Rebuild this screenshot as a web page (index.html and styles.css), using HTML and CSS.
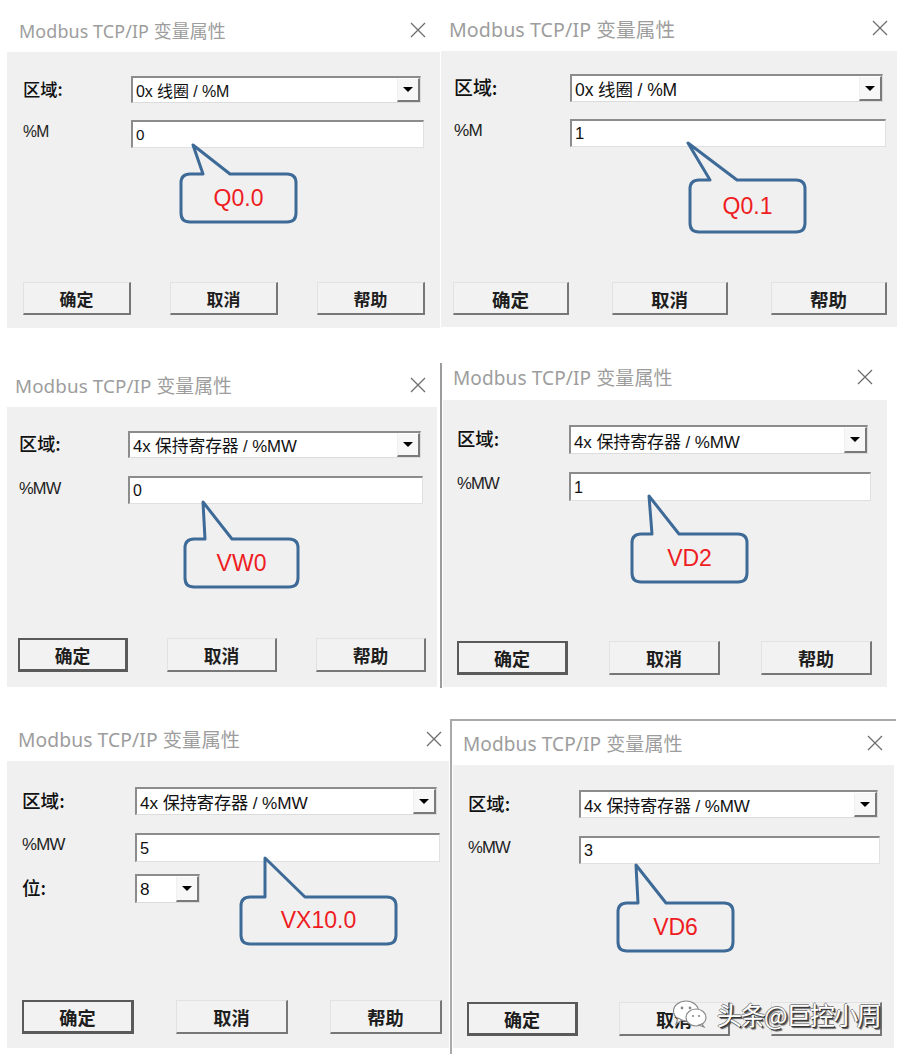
FILE: index.html
```html
<!DOCTYPE html>
<html lang="zh-CN">
<head>
<meta charset="utf-8">
<title>Modbus TCP/IP 变量属性</title>
<link rel="stylesheet" href="styles.css">
</head>
<body>
<div class="canvas">

  <section class="dlg d1">
    <header class="tbar"><span class="ttl">Modbus TCP/IP 变量属性</span><svg class="close" viewBox="0 0 16 16"><path d="M1 1L15 15M15 1L1 15"/></svg></header>
    <div class="body">
      <div class="row"><span class="lbl">区域:</span><div class="combo"><span class="ctext">0x 线圈 / %M</span><span class="drop"><i class="arrow"></i></span></div></div>
      <div class="row r2"><span class="lbl sm">%M</span><div class="field">0</div></div>
      <div class="btns"><div class="btn">确定</div><div class="btn">取消</div><div class="btn">帮助</div></div>
    </div>
  </section>

  <section class="dlg d2">
    <header class="tbar"><span class="ttl">Modbus TCP/IP 变量属性</span><svg class="close" viewBox="0 0 16 16"><path d="M1 1L15 15M15 1L1 15"/></svg></header>
    <div class="body">
      <div class="row"><span class="lbl">区域:</span><div class="combo"><span class="ctext">0x 线圈 / %M</span><span class="drop"><i class="arrow"></i></span></div></div>
      <div class="row r2"><span class="lbl sm">%M</span><div class="field">1</div></div>
      <div class="btns"><div class="btn">确定</div><div class="btn">取消</div><div class="btn">帮助</div></div>
    </div>
  </section>

  <section class="dlg d3">
    <header class="tbar"><span class="ttl">Modbus TCP/IP 变量属性</span><svg class="close" viewBox="0 0 16 16"><path d="M1 1L15 15M15 1L1 15"/></svg></header>
    <div class="body">
      <div class="row"><span class="lbl">区域:</span><div class="combo"><span class="ctext">4x 保持寄存器 / %MW</span><span class="drop"><i class="arrow"></i></span></div></div>
      <div class="row r2"><span class="lbl sm">%MW</span><div class="field">0</div></div>
      <div class="btns"><div class="btn def">确定</div><div class="btn">取消</div><div class="btn">帮助</div></div>
    </div>
  </section>

  <section class="dlg d4">
    <header class="tbar"><span class="ttl">Modbus TCP/IP 变量属性</span><svg class="close" viewBox="0 0 16 16"><path d="M1 1L15 15M15 1L1 15"/></svg></header>
    <div class="body">
      <div class="row"><span class="lbl">区域:</span><div class="combo"><span class="ctext">4x 保持寄存器 / %MW</span><span class="drop"><i class="arrow"></i></span></div></div>
      <div class="row r2"><span class="lbl sm">%MW</span><div class="field">1</div></div>
      <div class="btns"><div class="btn def">确定</div><div class="btn">取消</div><div class="btn">帮助</div></div>
    </div>
  </section>

  <section class="dlg d5">
    <header class="tbar"><span class="ttl">Modbus TCP/IP 变量属性</span><svg class="close" viewBox="0 0 16 16"><path d="M1 1L15 15M15 1L1 15"/></svg></header>
    <div class="body">
      <div class="row"><span class="lbl">区域:</span><div class="combo"><span class="ctext">4x 保持寄存器 / %MW</span><span class="drop"><i class="arrow"></i></span></div></div>
      <div class="row r2"><span class="lbl sm">%MW</span><div class="field">5</div></div>
      <div class="row r3"><span class="lbl">位:</span><div class="combo bit"><span class="ctext">8</span><span class="drop"><i class="arrow"></i></span></div></div>
      <div class="btns"><div class="btn def">确定</div><div class="btn">取消</div><div class="btn">帮助</div></div>
    </div>
  </section>

  <section class="dlg d6">
    <header class="tbar"><span class="ttl">Modbus TCP/IP 变量属性</span><svg class="close" viewBox="0 0 16 16"><path d="M1 1L15 15M15 1L1 15"/></svg></header>
    <div class="body">
      <div class="row"><span class="lbl">区域:</span><div class="combo"><span class="ctext">4x 保持寄存器 / %MW</span><span class="drop"><i class="arrow"></i></span></div></div>
      <div class="row r2"><span class="lbl sm">%MW</span><div class="field">3</div></div>
      <div class="btns"><div class="btn def">确定</div><div class="btn">取消</div><div class="btn"></div></div>
    </div>
  </section>

  <svg class="callouts" viewBox="0 0 903 1054" width="903" height="1054">
    <path d="M203 174L193 145L230 174H287Q296 174 296 183V213Q296 222 287 222H190Q181 222 181 213V183Q181 174 190 174Z"/>
    <path d="M710 180L688 143L737 180H796Q805 180 805 189V223Q805 232 796 232H699Q690 232 690 223V189Q690 180 699 180Z"/>
    <path d="M205 539L203 502L232 539H289Q298 539 298 548V578Q298 587 289 587H194Q185 587 185 578V548Q185 539 194 539Z"/>
    <path d="M652 534L649 496L679 534H738Q747 534 747 543V573Q747 582 738 582H641Q632 582 632 573V543Q632 534 641 534Z"/>
    <path d="M265 897L265 858L305 897H387Q396 897 396 906V935Q396 944 387 944H250Q241 944 241 935V906Q241 897 250 897Z"/>
    <path d="M638 903L636 865L666 903H724Q733 903 733 912V942Q733 951 724 951H627Q618 951 618 942V912Q618 903 627 903Z"/>
  </svg>
  <span class="ctag c1">Q0.0</span>
  <span class="ctag c2">Q0.1</span>
  <span class="ctag c3">VW0</span>
  <span class="ctag c4">VD2</span>
  <span class="ctag c5">VX10.0</span>
  <span class="ctag c6">VD6</span>

  <div class="wmark">
    <svg class="wx" viewBox="0 0 36 28">
      <ellipse cx="14" cy="11" rx="12.5" ry="10" />
      <path d="M6 18L4 24L10 20Z"/>
      <ellipse cx="24" cy="17.5" rx="10" ry="8.5" />
      <path d="M30 24L32 27L27 25Z"/>
      <circle class="eye" cx="10" cy="8" r="1.4"/>
      <circle class="eye" cx="18" cy="8" r="1.4"/>
      <circle class="eye" cx="21" cy="16" r="1.1"/>
      <circle class="eye" cx="27" cy="16" r="1.1"/>
    </svg>
    <span class="wtext">头条@巨控小周</span>
  </div>
</div>
</body>
</html>
```

FILE: styles.css
```css
html, body {
  margin: 0;
  padding: 0;
  background: #ffffff;
}

.canvas {
  position: relative;
  width: 903px;
  height: 1054px;
  overflow: hidden;
  background: #ffffff;
  font-family: "Liberation Sans", "Noto Sans CJK SC", sans-serif;
}

/* ---------- dialog windows placed on the collage ---------- */
.dlg {
  position: absolute;
  left: var(--x);
  top: var(--y);
  width: var(--w);
  display: flex;
  flex-direction: column;
  font-size: var(--fs);
}

.d1 { --x: 7px;   --y: 0px;   --w: 433px; --th: 52px; --tpt: 8px; --tpl: 12px; --cx: 22px; --fs: 16px;
      --bh: 276px; --r1: 24px; --lx: 16px; --fx: 124px; --cw: 290px; --ch: 27px; --g2: 17px; --fw: 293px; --fh: 28px;
      --bx: 16px; --bw: 108px; --bgap: 39px; --bth: 33px; --bb: 13px; }
.d2 { --x: 441px; --y: 0px;   --w: 456px; --th: 51px; --tpt: 5px; --tpl: 8px; --cx: 17px; --fs: 17.5px;
      --bh: 276px; --r1: 23px; --lx: 13px; --fx: 129px; --cw: 313px; --ch: 28px; --g2: 17px; --fw: 316px; --fh: 28px;
      --bx: 12px; --bw: 116px; --bgap: 43px; --bth: 33px; --bb: 12px; }
.d3 { --x: 7px;   --y: 355px; --w: 430px; --th: 52px; --tpt: 8px; --tpl: 8px; --cx: 19px; --fs: 16.8px;
      --bh: 280px; --r1: 24px; --lx: 12px; --fx: 121px; --cw: 293px; --ch: 27px; --g2: 18px; --fw: 295px; --fh: 28px;
      --bx: 11px; --bw: 110px; --bgap: 39px; --bth: 34px; --bb: 15px; }
.d4 { --x: 443px; --y: 350px; --w: 444px; --th: 50px; --tpt: 3px; --tpl: 10px; --cx: 22px; --fs: 17px;
      --bh: 287px; --r1: 25px; --lx: 14px; --fx: 126px; --cw: 299px; --ch: 29px; --g2: 18px; --fw: 302px; --fh: 29px;
      --bx: 14px; --bw: 111px; --bgap: 41px; --bth: 34px; --bb: 12px; }
.d5 { --x: 7px;   --y: 710px; --w: 442px; --th: 51px; --tpt: 6px; --tpl: 11px; --cx: 15px; --fs: 17.2px;
      --bh: 287px; --r1: 26px; --lx: 15px; --fx: 128px; --cw: 302px; --ch: 28px; --g2: 18px; --fw: 305px; --fh: 29px;
      --bx: 15px; --bw: 112px; --bgap: 42px; --bth: 34px; --bb: 14px; }
.d6 { --x: 453px; --y: 720px; --w: 441px; --th: 45px; --tpt: 0px; --tpl: 10px; --cx: 19px; --fs: 17px;
      --bh: 283px; --r1: 25px; --lx: 15px; --fx: 126px; --cw: 299px; --ch: 28px; --g2: 18px; --fw: 301px; --fh: 28px;
      --bx: 14px; --bw: 111px; --bgap: 41px; --bth: 34px; --bb: 12px; }

/* window frame edges that show in the collage */
.d4::before {
  content: "";
  position: absolute;
  left: -3px;
  top: 13px;
  width: 2px;
  height: 325px;
  background: #9c9c9c;
}
.d6::before {
  content: "";
  position: absolute;
  left: -3px;
  top: -1px;
  width: 444px;
  height: 340px;
  border-top: 2px solid #a9a9a9;
  border-left: 2px solid #a9a9a9;
}

/* ---------- title bar ---------- */
.tbar {
  height: var(--th);
  box-sizing: border-box;
  padding-top: var(--tpt);
  padding-left: var(--tpl);
  padding-right: calc(var(--cx) - 8px);
  display: flex;
  align-items: center;
  justify-content: space-between;
  background: #ffffff;
}
.ttl {
  font-family: "Noto Sans", "Noto Sans CJK SC", sans-serif;
  font-size: 1.12em;
  color: #9d9d9d;
  white-space: nowrap;
  letter-spacing: 0.1px;
}
.close {
  width: 16px;
  height: 16px;
  flex: none;
}
.close path {
  stroke: #6e6e6e;
  stroke-width: 1.3;
  fill: none;
}

/* ---------- body ---------- */
.body {
  height: var(--bh);
  box-sizing: border-box;
  background: #f0f0f0;
  padding-top: var(--r1);
  padding-bottom: var(--bb);
  display: flex;
  flex-direction: column;
}
.row {
  display: flex;
  align-items: center;
  padding-left: var(--lx);
}
.r2 { margin-top: var(--g2); }
.r3 { margin-top: 12px; }

.lbl {
  flex: none;
  width: calc(var(--fx) - var(--lx));
  font-family: "Noto Sans CJK SC", sans-serif;
  font-size: 1.08em;
  font-weight: 500;
  color: #111;
  line-height: 1;
  margin-top: -2px;
}
.lbl.sm {
  font-family: "Liberation Sans", sans-serif;
  font-size: 0.98em;
  letter-spacing: -0.8px;
  margin-top: -4px;
  color: #222;
}

.combo {
  width: var(--cw);
  height: var(--ch);
  box-sizing: border-box;
  display: flex;
  align-items: stretch;
  background: #ffffff;
  border-top: 2px solid #8c8c8c;
  border-left: 2px solid #8c8c8c;
  border-right: 1px solid #dcdcdc;
  border-bottom: 1px solid #dcdcdc;
}
.combo.bit {
  width: 65px;
  height: 29px;
}
.ctext {
  flex: 1;
  display: flex;
  align-items: center;
  padding-left: 3px;
  font-size: 1em;
  color: #111;
  white-space: nowrap;
  overflow: hidden;
  letter-spacing: -0.1px;
}
.drop {
  flex: none;
  width: 23px;
  box-sizing: border-box;
  display: flex;
  align-items: center;
  justify-content: center;
  background: #f7f7f7;
  border-left: 1px solid #f0f0f0;
  border-top: 1px solid #ffffff;
  border-right: 2px solid #7a7a7a;
  border-bottom: 2px solid #7a7a7a;
}
.arrow {
  width: 0;
  height: 0;
  border-left: 5px solid transparent;
  border-right: 5px solid transparent;
  border-top: 5px solid #000;
}

.field {
  width: var(--fw);
  height: var(--fh);
  box-sizing: border-box;
  display: flex;
  align-items: center;
  padding-left: 3px;
  background: #ffffff;
  border-top: 2px solid #8c8c8c;
  border-left: 2px solid #8c8c8c;
  border-right: 1px solid #e0e0e0;
  border-bottom: 1px solid #e0e0e0;
  font-size: 0.95em;
  color: #111;
}

/* ---------- buttons ---------- */
.btns {
  margin-top: auto;
  display: flex;
  gap: var(--bgap);
  padding-left: var(--bx);
}
.btn {
  width: var(--bw);
  height: var(--bth);
  box-sizing: border-box;
  display: flex;
  align-items: center;
  justify-content: center;
  background: #f2f2f2;
  border-top: 1px solid #e2e2e2;
  border-left: 1px solid #e2e2e2;
  border-right: 2px solid #777777;
  border-bottom: 2px solid #777777;
  font-family: "Noto Sans CJK SC", sans-serif;
  font-weight: 700;
  font-size: 1.06em;
  color: #1e1e1e;
}
.btn.def {
  border: 2px solid #5a5a5a;
  border-right-width: 3px;
  border-bottom-width: 3px;
}

/* ---------- callouts overlay ---------- */
.callouts {
  position: absolute;
  left: 0;
  top: 0;
  pointer-events: none;
}
.callouts path {
  fill: #f0f0f0;
  stroke: #3d6a97;
  stroke-width: 3;
  stroke-linejoin: round;
}
.ctag {
  position: absolute;
  display: flex;
  align-items: center;
  justify-content: center;
  font-family: "Liberation Sans", Arial, sans-serif;
  font-size: 23px;
  color: #ee1d23;
  line-height: 1;
}
.c1 { left: 181px; top: 174px; width: 115px; height: 48px; }
.c2 { left: 690px; top: 180px; width: 115px; height: 52px; }
.c3 { left: 185px; top: 539px; width: 113px; height: 48px; }
.c4 { left: 632px; top: 534px; width: 115px; height: 48px; }
.c5 { left: 241px; top: 897px; width: 155px; height: 47px; }
.c6 { left: 618px; top: 903px; width: 115px; height: 48px; }

/* ---------- watermark ---------- */
.wmark {
  position: absolute;
  left: 672px;
  top: 1000px;
  display: flex;
  align-items: center;
  gap: 9px;
}
.wx {
  width: 36px;
  height: 28px;
}
.wx ellipse, .wx path {
  fill: #ffffff;
  stroke: #8a8a8a;
  stroke-width: 1.2;
}
.wx .eye {
  fill: #8a8a8a;
}
.wtext {
  font-family: "Noto Sans CJK SC", sans-serif;
  font-size: 25px;
  line-height: 1;
  color: #ffffff;
  letter-spacing: -1.5px;
  text-shadow: 1px 1px 0 #333, -1px 0 0 #888, 0 -1px 0 #888, 2px 2px 1px #555;
}
```
